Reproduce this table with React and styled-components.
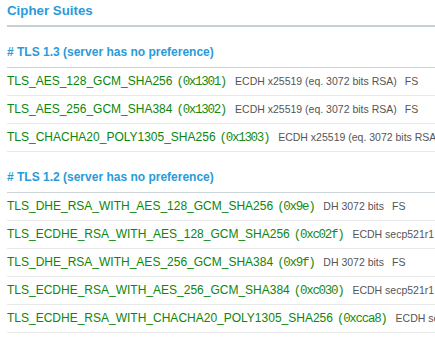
import React from "react";
import styled, { createGlobalStyle } from "styled-components";

const tls13 = [
  { name: "TLS_AES_128_GCM_SHA256", code: "0x1301", kx: "ECDH x25519 (eq. 3072 bits RSA)", fs: true },
  { name: "TLS_AES_256_GCM_SHA384", code: "0x1302", kx: "ECDH x25519 (eq. 3072 bits RSA)", fs: true },
  { name: "TLS_CHACHA20_POLY1305_SHA256", code: "0x1303", kx: "ECDH x25519 (eq. 3072 bits RSA)", fs: true },
];

const tls12 = [
  { name: "TLS_DHE_RSA_WITH_AES_128_GCM_SHA256", code: "0x9e", kx: "DH 3072 bits", fs: true },
  { name: "TLS_ECDHE_RSA_WITH_AES_128_GCM_SHA256", code: "0xc02f", kx: "ECDH secp521r1 (eq. 15360 bits RSA)", fs: true },
  { name: "TLS_DHE_RSA_WITH_AES_256_GCM_SHA384", code: "0x9f", kx: "DH 3072 bits", fs: true },
  { name: "TLS_ECDHE_RSA_WITH_AES_256_GCM_SHA384", code: "0xc030", kx: "ECDH secp521r1 (eq. 15360 bits RSA)", fs: true },
  { name: "TLS_ECDHE_RSA_WITH_CHACHA20_POLY1305_SHA256", code: "0xcca8", kx: "ECDH secp521r1 (eq. 15360 bits RSA)", fs: true },
];

const sections = [
  { title: "# TLS 1.3 (server has no preference)", suites: tls13 },
  { title: "# TLS 1.2 (server has no preference)", suites: tls12 },
];

const App = () => {
  return (
    <>
      <GlobalStyle />
      <Page>
        <Title>Cipher Suites</Title>
        {sections.map((section) => (
          <Section key={section.title}>
            <Heading>{section.title}</Heading>
            {section.suites.map((suite) => (
              <Row key={suite.code}>
                <Name>{suite.name}</Name>
                <Code>({suite.code})</Code>
                <Info>{suite.kx}</Info>
                {suite.fs && <Info $gap={8}>FS</Info>}
              </Row>
            ))}
          </Section>
        ))}
      </Page>
    </>
  );
};

export default App;

const GlobalStyle = createGlobalStyle`
  html, body {
    margin: 0;
    padding: 0;
    background: #ffffff;
    overflow: hidden;
  }
  body {
    font-family: "Liberation Sans", Arial, sans-serif;
  }
`;

const Page = styled.div`
  padding-left: 7px;
  white-space: nowrap;
`;

const Title = styled.div`
  padding: 3px 0 6px;
  font-size: 13.3px;
  line-height: 16px;
  font-weight: bold;
  color: #2b9ad9;
  border-bottom: 2px solid #c6d1d5;
`;

const Section = styled.div`
  display: flex;
  flex-direction: column;
`;

const Heading = styled.div`
  margin-top: 17px;
  padding-bottom: 7px;
  font-size: 12px;
  line-height: 16px;
  font-weight: bold;
  color: #2b9ad9;
  border-bottom: 1px solid #cdd5d9;
`;

const Row = styled.div`
  height: 27px;
  line-height: 27px;
  font-size: 12px;
  border-bottom: 1px solid #e9e9e9;
`;

const Name = styled.span`
  color: #0c860c;
`;

const Code = styled.span`
  margin-left: 4px;
  font-family: "Liberation Mono", "DejaVu Sans Mono", monospace;
  font-size: 12.5px;
  letter-spacing: -1.3px;
  color: #1a8a10;
`;

const Info = styled.span`
  margin-left: ${(p) => p.$gap || 9}px;
  font-size: 10.5px;
  color: #555555;
`;
